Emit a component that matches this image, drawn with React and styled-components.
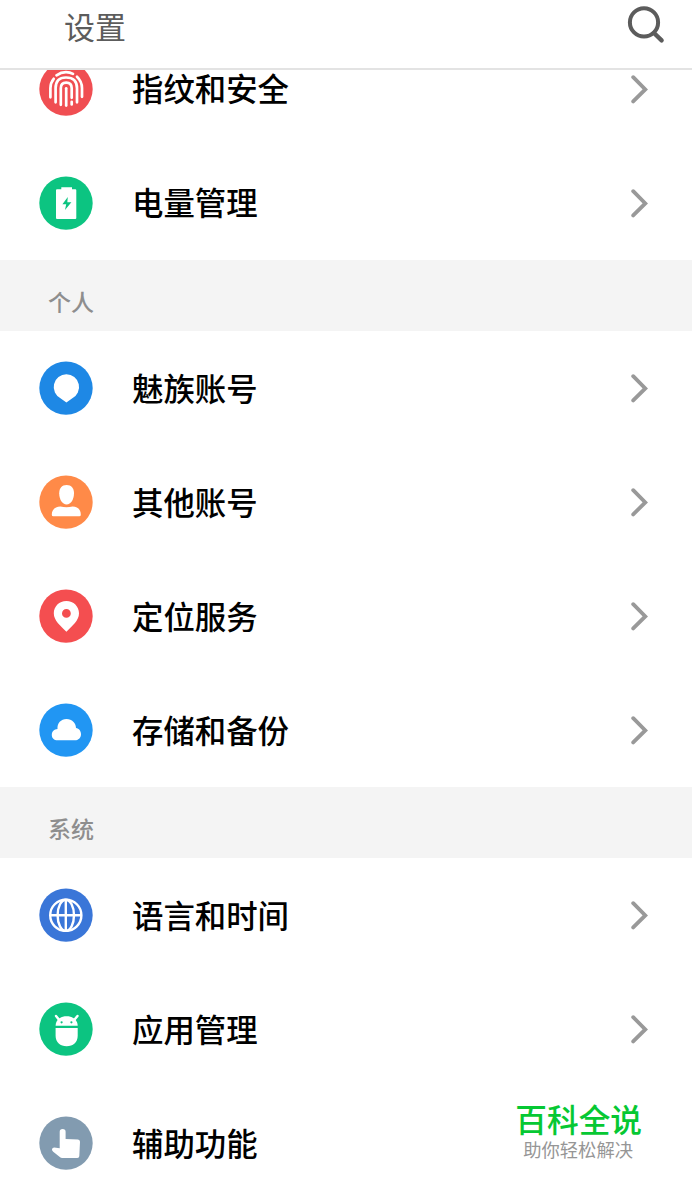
import styled, { createGlobalStyle } from "styled-components";

const GlobalStyle = createGlobalStyle`
  * {
    box-sizing: border-box;
  }

  body {
    margin: 0;
    background: #fff;
    font-family: "Noto Sans CJK SC", "Liberation Sans", sans-serif;
  }
`;

const Screen = styled.div`
  position: relative;
  display: flex;
  flex-direction: column;
  height: 1194px;
  overflow: hidden;
  background: #fff;
`;

const Header = styled.header`
  display: flex;
  flex: none;
  align-items: flex-start;
  justify-content: space-between;
  height: 70px;
  padding: 4px 26px 0 64px;
  border-bottom: 2px solid #e3e3e3;
`;

const Title = styled.h1`
  margin: 0;
  font-size: 31px;
  font-weight: 400;
  line-height: 44px;
  color: #5c5c5c;
`;

const SearchButton = styled.button`
  display: flex;
  padding: 1px 0 0;
  border: none;
  background: none;
  cursor: pointer;
`;

const Content = styled.main`
  flex: 1;
  min-height: 0;
  overflow: hidden;
`;

/* The list is scrolled a little, so the first row goes under the header */
const List = styled.div`
  margin-top: -38px;
`;

const SectionTitle = styled.h2`
  height: 71px;
  margin: 0;
  padding: 13px 0 0 48px;
  background: #f4f4f4;
  font-size: 23px;
  font-weight: 500;
  line-height: 56px;
  color: #8e8e8e;
`;

const Row = styled.div`
  display: flex;
  align-items: center;
  height: 114px;
  padding: 0 42px 0 39px;
  cursor: pointer;
`;

const IconSvg = styled.svg`
  flex: none;
  width: 54px;
  height: 54px;
`;

const Label = styled.span`
  flex: 1;
  margin: 0 0 2px 39px;
  font-size: 31.4px;
  font-weight: 500;
  line-height: 34px;
  color: #000;

  ${SectionTitle} ~ ${Row} & {
    margin-bottom: 0;
  }
`;

/* White behind the text, it hides the arrow of the last row */
const Watermark = styled.div`
  position: absolute;
  right: 42px;
  bottom: 32px;
  display: flex;
  flex-direction: column;
  align-items: center;
  padding: 0 8px;
  background: #fff;
`;

const Brand = styled.strong`
  font-size: 31.7px;
  font-weight: 500;
  line-height: 36px;
  color: #06c833;
`;

const Slogan = styled.span`
  margin-right: 1px;
  font-size: 18.3px;
  line-height: 26px;
  color: #969696;
`;

const SearchIcon = () => (
  <svg width="40" height="42" viewBox="0 0 40 42" fill="none">
    <circle cx="18" cy="17.4" r="14.1" stroke="#5c5c5c" strokeWidth="4" />
    <path
      d="M28 28l7.6 7.4"
      stroke="#5c5c5c"
      strokeWidth="4.4"
      strokeLinecap="round"
    />
  </svg>
);

const Chevron = () => (
  <svg width="20" height="30" viewBox="0 0 20 30" fill="none">
    <path
      d="M3.2 3.2L15.3 15.4 3.2 27.4"
      stroke="#999"
      strokeWidth="3.8"
      strokeLinecap="round"
    />
  </svg>
);

const glyphs = {
  fingerprint: (
    <g fill="none" stroke="#fff" strokeWidth="2.7" strokeLinecap="round">
      <path d="M17.5 13Q22 9.9 27 9.9Q31 9.9 34 11.6" />
      <path d="M11.4 35V26Q11.4 20.5 14.7 16.5" />
      <path d="M38 14.5Q43 19.3 43 26V34.5" />
      <path d="M16.6 40V26Q16.6 15.2 27 15.2Q38 15.2 38 26V40" />
      <path d="M21.8 42.5V26Q21.8 20.4 27.2 20.4Q32.7 20.4 32.7 26V35.5M32.7 39.5V42.2" />
      <path d="M27.2 26V43.3" />
    </g>
  ),
  battery: (
    <>
      <path
        d="M18 13H22.3V11H33V13H36.3Q37.3 13 37.3 14V41.7Q37.3 42.7 36.3 42.7H18Q17 42.7 17 41.7V14Q17 13 18 13Z"
        fill="#fff"
      />
      <path d="M28.8 20.7L23.4 28H27.2L26 33.7L32.4 26H28.3Z" fill="#0cc481" />
    </>
  ),
  drop: (
    <path
      d="M27.4 13A12.7 12.7 0 0 1 33 37.1L27.4 41.2L21.8 37.1A12.7 12.7 0 0 1 27.4 13Z"
      fill="#fff"
    />
  ),
  person: (
    <g fill="#fff">
      <path d="M27.6 9.8C32.4 9.8 35 13 35 18C35 24.2 31.9 29.2 27.6 29.2C23.3 29.2 20.2 24.2 20.2 18C20.2 13 22.8 9.8 27.6 9.8Z" />
      <path d="M12.8 39.5C12.8 34.3 16 31.5 21.5 31.2C25 32.1 30 32.1 33.5 31.2C39 31.5 41.8 34.3 41.8 39.5Q41.8 41 40.3 41H14.3Q12.8 41 12.8 39.5Z" />
    </g>
  ),
  pin: (
    <path
      d="M27.4 11.7C34.6 11.7 40 17.2 40 24C40 31.3 33.5 36.3 27.4 42.4C21.3 36.3 14.8 31.3 14.8 24C14.8 17.2 20.2 11.7 27.4 11.7ZM27.4 19.7A4.4 4.4 0 1 0 27.4 28.5A4.4 4.4 0 1 0 27.4 19.7Z"
      fill="#fff"
      fillRule="evenodd"
    />
  ),
  cloud: (
    <path
      d="M18.6 37C15 37 12.8 34.8 12.8 31.7C12.8 28.3 15.3 26 18.5 25.8C18 20 22 15.7 27.5 15.7C33 15.7 37 19.7 37 24.7C40 25.2 42 27.8 42 30.9C42 34.5 39.3 37 35.8 37Z"
      fill="#fff"
    />
  ),
  globe: (
    <g fill="none" stroke="#fff" strokeWidth="2.4">
      <circle cx="26.8" cy="27" r="15.6" />
      <ellipse cx="26.8" cy="27" rx="8.2" ry="15.6" />
      <path d="M11 27H42.6M26.8 11.4V42.6" />
    </g>
  ),
  android: (
    <>
      <path
        d="M17 13.6L20 17.4M38.5 13.6L35.4 17.4"
        stroke="#fff"
        strokeWidth="2.4"
        strokeLinecap="round"
      />
      <path
        d="M16.6 23.5C16.8 18.3 20.3 14 27.6 14C34.9 14 38.5 18.3 38.7 23.5Z"
        fill="#fff"
      />
      <circle cx="22.6" cy="20" r="1.1" fill="#0cc481" />
      <circle cx="32.4" cy="20" r="1.1" fill="#0cc481" />
      <path
        d="M16.6 25.6H38.7V33.5C38.7 40 34 44 27.6 44C21.3 44 16.6 40 16.6 33.5Z"
        fill="#fff"
      />
    </>
  ),
  hand: (
    <path
      d="M20.7 15.4Q20.7 12.6 23.6 12.6Q26.6 12.6 26.6 15.4V22.8L39 23.2Q41 23.4 41 25.4L40.3 40Q40.2 41.8 38.3 41.8H23.2Q21.9 41.8 20.8 40.8L14.2 35.5Q12.8 34.3 13 32.9Q13.3 31.1 15.2 31.1L20.7 32Z"
      fill="#fff"
    />
  ),
};

const RowIcon = ({ name, color }) => (
  <IconSvg viewBox="0 -0.3 54 54">
    <circle cx="27" cy="26.8" r="26.7" fill={color} />
    {glyphs[name]}
  </IconSvg>
);

const sections = [
  {
    items: [
      { icon: "fingerprint", color: "#f04e52", label: "指纹和安全" },
      { icon: "battery", color: "#0cc481", label: "电量管理" },
    ],
  },
  {
    title: "个人",
    items: [
      { icon: "drop", color: "#1e88e5", label: "魅族账号" },
      { icon: "person", color: "#ff8a48", label: "其他账号" },
      { icon: "pin", color: "#f44e50", label: "定位服务" },
      { icon: "cloud", color: "#2196f3", label: "存储和备份" },
    ],
  },
  {
    title: "系统",
    items: [
      { icon: "globe", color: "#3a76d8", label: "语言和时间" },
      { icon: "android", color: "#0cc481", label: "应用管理" },
      { icon: "hand", color: "#829bb0", label: "辅助功能" },
    ],
  },
];

const App = () => {
  return (
    <>
      <GlobalStyle />
      <Screen>
        <Header>
          <Title>设置</Title>
          <SearchButton aria-label="搜索">
            <SearchIcon />
          </SearchButton>
        </Header>
        <Content>
          <List>
            {sections.map((section, index) => (
              <section key={index}>
                {section.title && <SectionTitle>{section.title}</SectionTitle>}
                {section.items.map((item) => (
                  <Row key={item.label}>
                    <RowIcon name={item.icon} color={item.color} />
                    <Label>{item.label}</Label>
                    <Chevron />
                  </Row>
                ))}
              </section>
            ))}
          </List>
        </Content>
        <Watermark>
          <Brand>百科全说</Brand>
          <Slogan>助你轻松解决</Slogan>
        </Watermark>
      </Screen>
    </>
  );
};

export default App;
